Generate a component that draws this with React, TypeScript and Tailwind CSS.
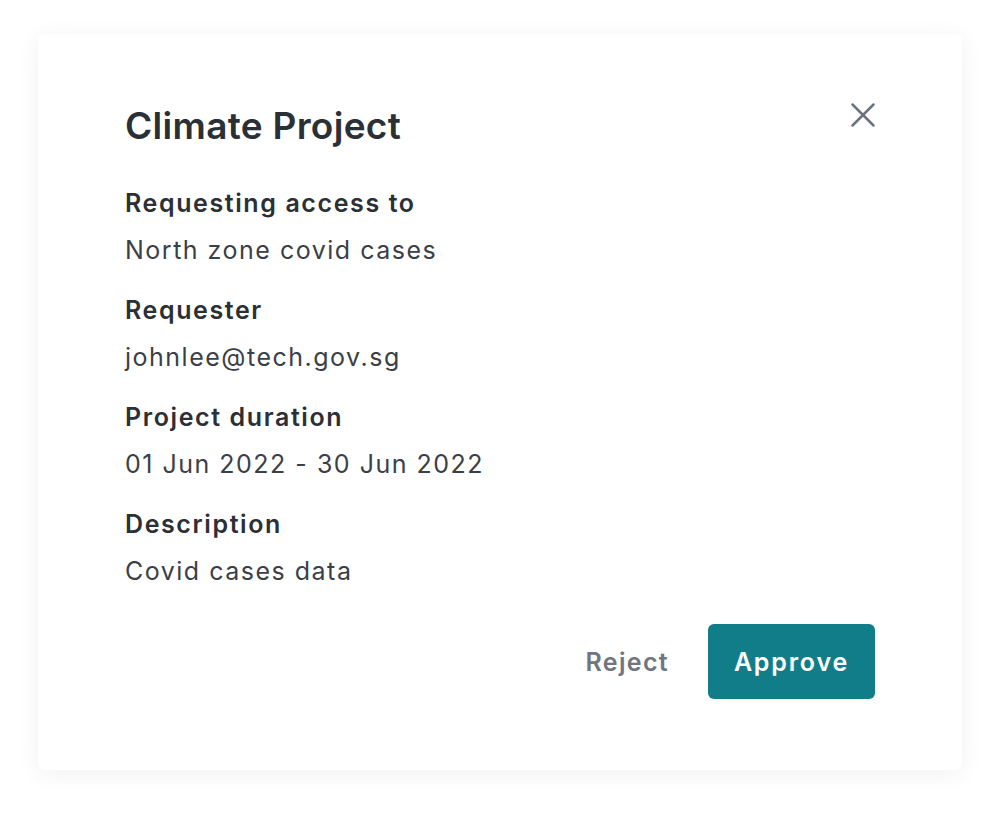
import React from "react";

const fields = [
  { label: "Requesting access to", value: "North zone covid cases" },
  { label: "Requester", value: "johnlee@tech.gov.sg" },
  { label: "Project duration", value: "01 Jun 2022 - 30 Jun 2022" },
  { label: "Description", value: "Covid cases data" },
];

export default function App() {
  return (
    <div
      className="w-[1000px] h-[819px] bg-white pt-[34px] pl-[38px]"
      style={{ fontFamily: "Inter, 'Noto Sans', sans-serif" }}
    >
      <div className="w-[924px] h-[736px] bg-white rounded-[6px] shadow-[0_4px_24px_rgba(0,0,0,0.06)] px-[87px] pt-[70px] pb-[73px] flex flex-col">
        <div className="flex items-start justify-between">
          <h1 className="text-[37px] leading-[44px] font-semibold text-[#2b2f36] tracking-[0.3px]">
            Climate Project
          </h1>
          <button className="w-[24px] h-[24px] mt-[-1px] text-[#6b7280]" aria-label="Close">
            <svg viewBox="0 0 24 24" width="24" height="24" fill="none" stroke="currentColor" strokeWidth="2.5" strokeLinecap="round">
              <line x1="1.5" y1="1.5" x2="22.5" y2="22.5" />
              <line x1="22.5" y1="1.5" x2="1.5" y2="22.5" />
            </svg>
          </button>
        </div>
        <div className="mt-[39px] flex flex-col gap-[28px]">
          {fields.map((f) => (
            <div key={f.label} className="flex flex-col gap-[15px]">
              <div className="text-[25px] leading-[32px] font-semibold text-[#2b2f36] tracking-[1.6px]">{f.label}</div>
              <div className="text-[25px] leading-[32px] font-normal text-[#3b3f47] tracking-[1.5px]">{f.value}</div>
            </div>
          ))}
        </div>
        <div className="mt-[37px] flex items-center justify-end gap-[39px]">
          <button className="text-[25px] leading-[32px] font-semibold text-[#70757e] tracking-[1.3px]">Reject</button>
          <button className="h-[75px] px-[26px] rounded-[6px] bg-[#117d89] text-white text-[25px] leading-[32px] font-semibold tracking-[1.8px]">
            Approve
          </button>
        </div>
      </div>
    </div>
  );
}
